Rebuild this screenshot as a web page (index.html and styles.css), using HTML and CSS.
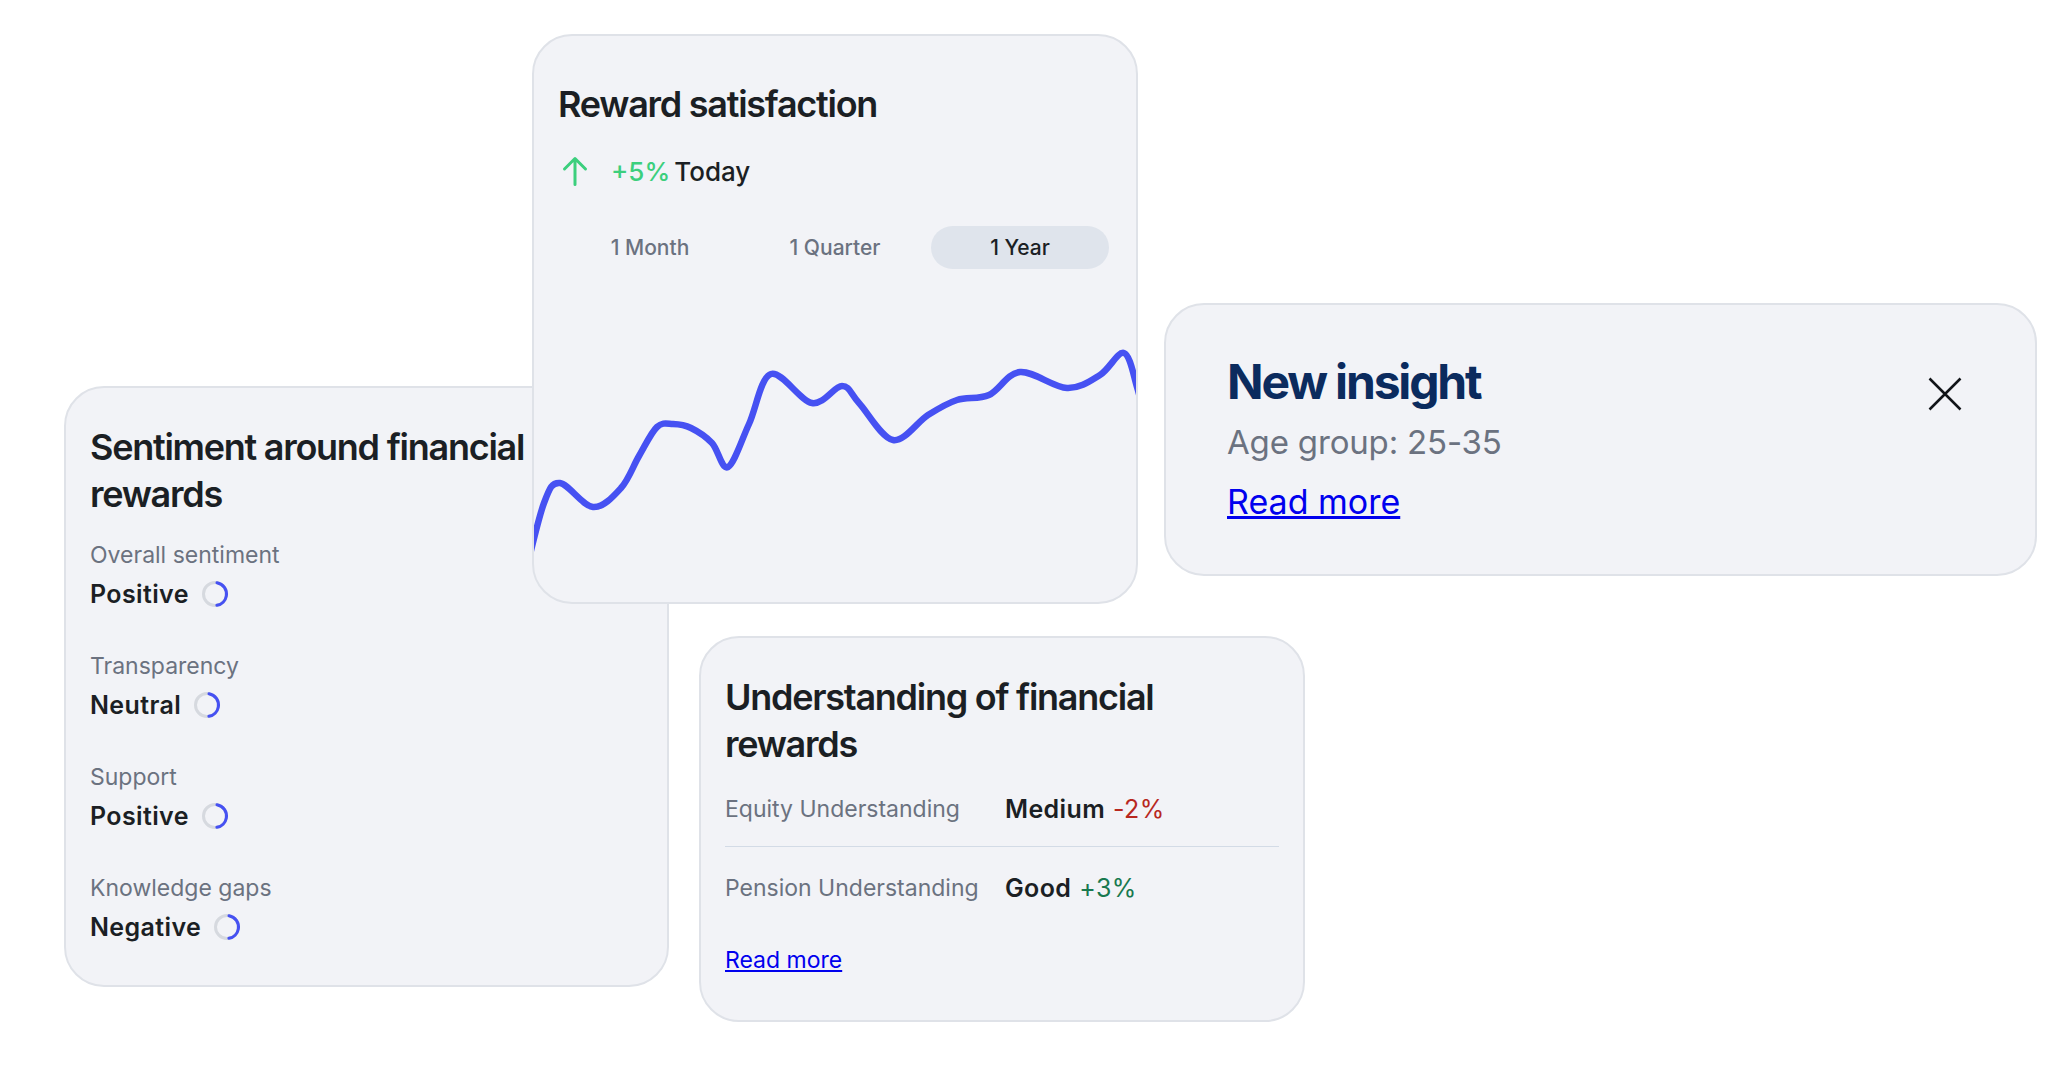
FILE: index.html
```html
<!DOCTYPE html>
<html lang="en">
<head>
<meta charset="utf-8">
<title>Rewards insights</title>
<link rel="stylesheet" href="styles.css">
</head>
<body>
<main class="canvas">

  <section class="card card-sentiment">
    <h2 class="title">Sentiment around financial rewards</h2>
    <dl class="metrics">
      <div class="metric">
        <dt class="metric-label">Overall sentiment</dt>
        <dd class="metric-value">Positive
          <svg class="spinner" viewBox="0 0 28 28" width="28" height="28"><circle class="spinner-track" cx="14" cy="14" r="11.5"/><circle class="spinner-arc" cx="14" cy="14" r="11.5" transform="rotate(-80 14 14)"/></svg>
        </dd>
      </div>
      <div class="metric">
        <dt class="metric-label">Transparency</dt>
        <dd class="metric-value">Neutral
          <svg class="spinner" viewBox="0 0 28 28" width="28" height="28"><circle class="spinner-track" cx="14" cy="14" r="11.5"/><circle class="spinner-arc" cx="14" cy="14" r="11.5" transform="rotate(-80 14 14)"/></svg>
        </dd>
      </div>
      <div class="metric">
        <dt class="metric-label">Support</dt>
        <dd class="metric-value">Positive
          <svg class="spinner" viewBox="0 0 28 28" width="28" height="28"><circle class="spinner-track" cx="14" cy="14" r="11.5"/><circle class="spinner-arc" cx="14" cy="14" r="11.5" transform="rotate(-80 14 14)"/></svg>
        </dd>
      </div>
      <div class="metric">
        <dt class="metric-label">Knowledge gaps</dt>
        <dd class="metric-value">Negative
          <svg class="spinner" viewBox="0 0 28 28" width="28" height="28"><circle class="spinner-track" cx="14" cy="14" r="11.5"/><circle class="spinner-arc" cx="14" cy="14" r="11.5" transform="rotate(-80 14 14)"/></svg>
        </dd>
      </div>
    </dl>
  </section>

  <section class="card card-reward">
    <h2 class="title">Reward satisfaction</h2>
    <div class="change">
      <svg class="change-icon" viewBox="0 0 28 32" width="28" height="32"><path d="M14 3.5V29.5M3.5 14L14 3.5L24.5 14"/></svg>
      <span class="change-pct">+5%</span>
      <span class="change-label">Today</span>
    </div>
    <div class="tabs">
      <span class="tab">1 Month</span>
      <span class="tab">1 Quarter</span>
      <span class="tab tab-active">1 Year</span>
    </div>
    <svg class="chart" viewBox="1 0 602 312" width="602" height="312">
      <path class="chart-line" d="M-8 285 C-4.8 273 5.2 228.3 11 213 C16.8 197.7 18.8 192.3 27 193 C35.2 193.7 49.8 216.2 60 217 C70.2 217.8 80.3 206.5 88 198 C95.7 189.5 100 176.2 106 166 C112 155.8 118.3 142.3 124 137 C129.7 131.7 134.3 133.8 140 134 C145.7 134.2 151.5 134.8 158 138 C164.5 141.2 172.8 146.5 179 153 C185.2 159.5 188.8 180.2 195 177 C201.2 173.8 208.8 149.5 216 134 C223.2 118.5 227.5 87.5 238 84 C248.5 80.5 267.2 111 279 113 C290.8 115 301.2 96 309 96 C316.8 96 317.5 104 326 113 C334.5 122 348.5 148 360 150 C371.5 152 384.3 131.7 395 125 C405.7 118.3 413.8 113.3 424 110 C434.2 106.7 445.5 109.7 456 105 C466.5 100.3 474 83.2 487 82 C500 80.8 520.7 97.5 534 98 C547.3 98.5 557.5 90.8 567 85 C576.5 79.2 584.8 61 591 63 C597.2 65 600.5 85.8 604 97 C607.5 108.2 610.7 124.5 612 130"/>
    </svg>
  </section>

  <section class="card card-insight">
    <div class="insight-body">
      <h2 class="insight-title">New insight</h2>
      <p class="insight-sub">Age group: 25-35</p>
      <a class="insight-link" href="#">Read more</a>
    </div>
    <svg class="close" viewBox="0 0 34 34" width="34" height="34"><path d="M1.5 1.5L32.5 32.5M32.5 1.5L1.5 32.5"/></svg>
  </section>

  <section class="card card-understanding">
    <h2 class="title title-tight">Understanding of financial rewards</h2>
    <div class="rows">
      <div class="row row-divided">
        <span class="row-label">Equity Understanding</span>
        <span class="row-value"><b class="row-level">Medium</b><span class="delta delta-down">-2%</span></span>
      </div>
      <div class="row row-last">
        <span class="row-label">Pension Understanding</span>
        <span class="row-value"><b class="row-level">Good</b><span class="delta delta-up">+3%</span></span>
      </div>
    </div>
    <a class="small-link" href="#">Read more</a>
  </section>

</main>
</body>
</html>
```

FILE: styles.css
```css
* {
  box-sizing: border-box;
  margin: 0;
  padding: 0;
}

body {
  margin: 0;
  background: #ffffff;
  font-family: Inter, "Noto Sans", sans-serif;
  color: #1b1f24;
}

.canvas {
  position: relative;
  width: 2048px;
  height: 1082px;
  overflow: hidden;
  background: #ffffff;
}

.card {
  position: absolute;
  background: #f2f3f7;
  border: 2px solid #dfe2e8;
  border-radius: 40px;
  overflow: hidden;
}

.card-sentiment {
  left: 64px;
  top: 386px;
  width: 605px;
  padding: 36px 24px 42px;
  z-index: 1;
}

.card-reward {
  left: 532px;
  top: 34px;
  width: 606px;
  padding: 45px 24px 0;
  z-index: 2;
}

.card-insight {
  left: 1164px;
  top: 303px;
  width: 873px;
  padding: 47px 73px 42px 61px;
  display: flex;
  align-items: flex-start;
}

.card-understanding {
  left: 699px;
  top: 636px;
  width: 606px;
  padding: 36px 24px 45px;
}

.title {
  font-size: 36px;
  font-weight: 600;
  line-height: 47px;
  letter-spacing: -0.035em;
  max-width: 470px;
  color: #1b1f24;
}

.title-tight {
  margin-bottom: 4px;
}

/* sentiment metrics */
.metrics {
  margin-top: 22px;
  display: flex;
  flex-direction: column;
  gap: 41px;
}

.metric-label {
  font-size: 23px;
  line-height: 30px;
  color: #6b7280;
}

.metric-value {
  margin-top: 8px;
  font-size: 25px;
  font-weight: 600;
  line-height: 32px;
  letter-spacing: 0.015em;
  display: flex;
  align-items: center;
  gap: 12px;
  color: #1b1f24;
}

.spinner {
  display: block;
  flex: none;
}

.spinner-track {
  fill: none;
  stroke: #d6d9df;
  stroke-width: 3;
}

.spinner-arc {
  fill: none;
  stroke: #4651f2;
  stroke-width: 3;
  stroke-linecap: round;
  stroke-dasharray: 32 73;
}

/* reward satisfaction */
.change {
  margin-top: 25px;
  height: 36px;
  display: flex;
  align-items: center;
  font-size: 26px;
  font-weight: 500;
}

.change-icon {
  display: block;
  margin-left: 3px;
  margin-right: 22px;
  fill: none;
  stroke: #3ccf7d;
  stroke-width: 3;
  stroke-linecap: round;
  stroke-linejoin: round;
}

.change-pct {
  color: #3ccf7d;
}

.change-label {
  margin-left: 4px;
  color: #1b1f24;
}

.tabs {
  margin: 37px 3px 0;
  display: grid;
  grid-template-columns: repeat(3, 1fr);
  gap: 7px;
}

.tab {
  height: 43px;
  border-radius: 22px;
  display: flex;
  align-items: center;
  justify-content: center;
  font-size: 21px;
  font-weight: 500;
  color: #6b7280;
}

.tab-active {
  background: #dfe4ec;
  color: #1b1f24;
}

.chart {
  display: block;
  margin: 21px -24px 0;
}

.chart-line {
  fill: none;
  stroke: #4651f2;
  stroke-width: 6.5;
  stroke-linecap: round;
  stroke-linejoin: round;
}

/* insight */
.insight-body {
  flex: 1;
  display: flex;
  flex-direction: column;
  align-items: flex-start;
}

.insight-title {
  font-size: 48px;
  font-weight: 700;
  line-height: 60px;
  letter-spacing: -0.045em;
  color: #0b2b5e;
}

.insight-sub {
  font-size: 33px;
  line-height: 60px;
  letter-spacing: -0.005em;
  color: #6b7280;
}

.insight-link {
  font-size: 34px;
  line-height: 60px;
  color: #0000ee;
  text-decoration: underline;
}

.close {
  display: block;
  flex: none;
  margin-top: 25px;
  fill: none;
  stroke: #111418;
  stroke-width: 2.5;
}

/* understanding */
.row {
  display: grid;
  grid-template-columns: 280px auto;
  align-items: center;
  padding: 21px 0;
  line-height: 32px;
}

.row-divided {
  border-bottom: 1px solid #d3dbe6;
}

.row-last {
  padding-top: 25px;
  padding-bottom: 19px;
}

.row-label {
  font-size: 23px;
  color: #6b7280;
}

.row-value {
  display: flex;
  align-items: baseline;
  gap: 8px;
  font-size: 25px;
  letter-spacing: 0.015em;
}

.row-level {
  font-weight: 600;
  color: #1b1f24;
}

.delta-down {
  color: #b8281f;
}

.delta-up {
  color: #19794f;
}

.small-link {
  display: inline-block;
  margin-top: 22px;
  font-size: 23px;
  line-height: 30px;
  color: #0000ee;
  text-decoration: underline;
}
```
